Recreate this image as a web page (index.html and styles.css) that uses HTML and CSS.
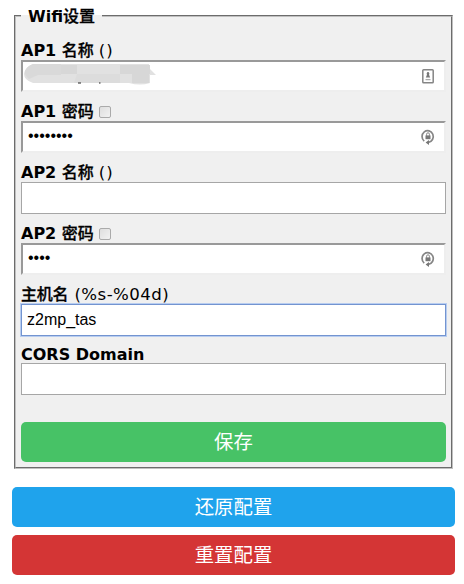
FILE: index.html
```html
<!DOCTYPE html>
<html lang="zh-CN">
<head>
<meta charset="utf-8">
<title>Wifi设置</title>
<link rel="stylesheet" href="styles.css">
</head>
<body>
<svg width="0" height="0" class="defs">
  <symbol id="lock" viewBox="0 0 16 18">
    <path d="M4.2 13.2A5.6 5.9 0 1 1 8.4 14.4" fill="none" stroke="#858585" stroke-width="1.7"/>
    <path d="M9 11.9v5L5.6 14.4z" fill="#777"/>
    <rect x="5.5" y="7.4" width="5" height="3.8" fill="#777"/>
    <path d="M6.6 8V6.2a1.4 1.4 0 0 1 2.8 0V8" fill="none" stroke="#888" stroke-width="1"/>
  </symbol>
</svg>
<form class="page">
  <fieldset class="panel">
    <legend><b class="legend-text">Wifi<span class="cjk">设置</span></b></legend>
    <div class="field">
      <div class="label"><b>AP1 <span class="cjk">名称</span></b><span class="hint parens">()</span></div>
      <div class="input inset">
        <svg class="smudge" width="140" height="24" viewBox="0 0 140 24">
          <path d="M10 1H126V5L133 12H127V20Q117 23 106 20H10Q1 17 1 11Q2 4 10 1Z" fill="#e1e1e1"/>
          <path d="M10 1H38V12H15L6 16Q1 12 2 8Q4 3 10 1Z" fill="#d9d9d9"/>
          <path d="M38 2H54V11H38ZM97 2H127V11H97ZM109 11H126V20H109Z" fill="#d7d7d7"/>
          <path d="M54 11H97V20H51Z" fill="#dcdcdc"/>
          <path d="M55 20h3M76 20h1.5" stroke="#222" stroke-width="1"/>
        </svg>
        <svg class="icon" width="16" height="18" viewBox="0 0 16 18">
          <rect x="2.8" y="2.8" width="10.4" height="13" rx=".8" fill="#fff" stroke="#858585" stroke-width="1.5"/>
          <circle cx="8" cy="6.3" r="1.2" fill="#777"/>
          <path d="M5.8 10.5Q6.8 8.8 7 7H9Q9.2 8.8 10.2 10.5Z" fill="#777"/>
          <path d="M5.5 12.6h5" stroke="#aaa" stroke-width="1.3"/>
        </svg>
      </div>
    </div>
    <div class="field">
      <div class="label"><b>AP1 <span class="cjk">密码</span></b><span class="check"></span></div>
      <div class="input inset"><span class="dots">••••••••</span><svg class="icon" width="16" height="18"><use href="#lock"/></svg></div>
    </div>
    <div class="field">
      <div class="label"><b>AP2 <span class="cjk">名称</span></b><span class="hint parens">()</span></div>
      <div class="input"></div>
    </div>
    <div class="field">
      <div class="label"><b>AP2 <span class="cjk">密码</span></b><span class="check"></span></div>
      <div class="input inset"><span class="dots">••••</span><svg class="icon" width="16" height="18"><use href="#lock"/></svg></div>
    </div>
    <div class="field host">
      <div class="label"><b class="cjk">主机名</b><span class="hint">(%s-%04d)</span></div>
      <div class="input focus">z2mp_tas</div>
    </div>
    <div class="field cors">
      <div class="label"><b>CORS Domain</b></div>
      <div class="input"></div>
    </div>
    <button type="button" class="btn save">保存</button>
  </fieldset>
  <button type="button" class="btn restore">还原配置</button>
  <button type="button" class="btn reset">重置配置</button>
</form>
</body>
</html>
```
FILE: styles.css
```css
* { box-sizing: border-box; }
body {
  margin: 0;
  background: #fff;
  color: #000;
  font: 16px/19px "DejaVu Sans", "Noto Sans CJK SC", sans-serif;
}
.defs { position: absolute; }
.page { width: 443px; margin-left: 12px; padding-top: 6px; }
.panel {
  display: block;
  width: 439px;
  height: 463px;
  margin: 0 2px 18px;
  padding: 15px 5px 0;
  border: 2px groove #c0c0c0;
  background: #f0f0f0;
}
legend { height: 20px; padding: 0 7px; line-height: 20px; }
.legend-text { display: block; margin-top: -1px; font-size: 16px; white-space: nowrap; }
.cjk {
  font-family: "Noto Sans CJK SC", sans-serif;
  font-size: 16px;
  font-weight: 500;
  letter-spacing: 0;
  -webkit-text-stroke: .3px #000;
}
.field { margin-bottom: 10px; }
.host { margin-bottom: 8px; }
.cors { margin-bottom: 27px; }
.label {
  display: flex;
  align-items: center;
  height: 19px;
  line-height: 19px;
  white-space: pre;
}
.label b { margin-top: -2px; font-size: 16px; }
.label b.cjk { font-size: 16px; letter-spacing: -.2px; }
.cors .label { padding-top: 3px; }
.hint { margin-left: 6px; font-size: 16.6px; letter-spacing: .45px; }
.parens { margin-left: 5px; letter-spacing: 1px; }
.check {
  width: 12px;
  height: 12px;
  margin-left: 5px;
  border: 1px solid #aaa;
  border-radius: 2px;
  background: linear-gradient(135deg, #dedede, #f2f2f2);
}
.input {
  display: flex;
  align-items: center;
  width: 425px;
  height: 32px;
  padding: 0 5px;
  border: 1px solid #a6a6a6;
  background: #fff;
  font: 16px/30px "Liberation Sans", sans-serif;
}
.inset {
  border: 2px solid #eee;
  border-top-color: #999;
  border-left-color: #999;
}
.focus { border-color: #7394d0; box-shadow: 0 0 0 1px #b8cdf0; }
.dots { margin-top: -2px; font-size: 16px; line-height: 28px; }
.icon { margin-left: auto; margin-right: 3px; }
.smudge { margin: -3px 0 0 -5px; }
.btn {
  display: block;
  width: 100%;
  height: 40px;
  margin: 0 0 8px;
  padding: 0 0 3px;
  border: 0;
  border-radius: 5px;
  color: #fff;
  font: 19.4px/37px "Noto Sans CJK SC", sans-serif;
}
.save { background: #47c266; }
.restore { background: #1fa3ec; }
.reset { margin: 0; background: #d43535; }
```
